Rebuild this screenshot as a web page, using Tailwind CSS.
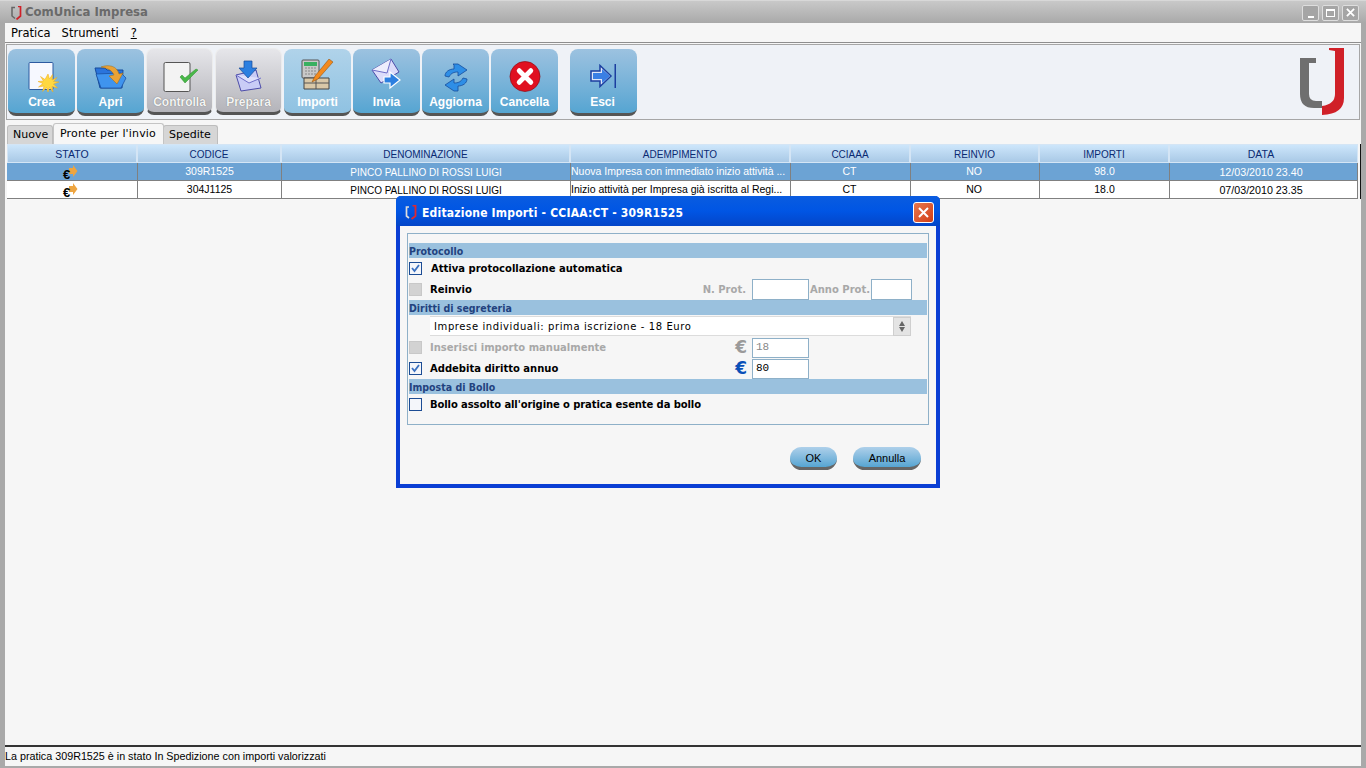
<!DOCTYPE html>
<html lang="it">
<head>
  <meta charset="UTF-8">
  <title>ComUnica Impresa</title>
  <script src="https://cdn.jsdelivr.net/npm/@tailwindcss/browser@4"></script>
</head>
<body class="relative w-[1366px] h-[768px] overflow-hidden bg-[#a9a9a9] font-['Liberation_Sans',sans-serif] text-black">

  <!-- Barra titolo -->
  <div class="h-[23px] flex items-center pl-[11px] pr-[7px] pt-[1px] bg-gradient-to-b from-[#c9c9c9] to-[#a9a9a9] border-t border-[#d8d8d8]">
    <svg width="11" height="14" viewBox="0 0 11 14"><path d="M4 1.500H1V10L4 12.500" fill="none" stroke="#666" stroke-width="1.500"/><path d="M7 .5H9.500V10L5.500 13.500" fill="none" stroke="#d02028" stroke-width="1.700"/></svg>
    <span class="ml-[3px] font-['DejaVu_Sans',sans-serif] font-bold text-[11.700px] text-[#6a6a6a]">ComUnica Impresa</span>
    <div class="ml-auto flex gap-[3px]">
      <div class="w-[17px] h-[16px] rounded-[2px] border border-[#dedede] bg-[#a5a5a5] flex items-end justify-center pb-[2px]"><div class="w-[6px] h-[2px] bg-white"></div></div>
      <div class="w-[17px] h-[16px] rounded-[2px] border border-[#dedede] bg-[#a5a5a5] flex items-center justify-center"><div class="w-[9px] h-[8px] border border-white border-t-2"></div></div>
      <div class="w-[17px] h-[16px] rounded-[2px] border border-[#dedede] bg-[#a5a5a5] flex items-center justify-center">
        <svg width="9" height="9" viewBox="0 0 10 10"><path d="M1 1L9 9M9 1L1 9" stroke="#fff" stroke-width="2"/></svg>
      </div>
    </div>
  </div>

  <!-- Finestra -->
  <div class="ml-[5px] mr-[5px] h-[743px] bg-[#f6f6f6] flex flex-col">
    <!-- Menu -->
    <div class="h-[20px] flex items-center pl-[6px] pt-[3px] gap-[11px] font-['DejaVu_Sans',sans-serif] text-[11.500px] border-b border-[#8e8e8e]">
      <span>Pratica</span><span>Strumenti</span><span class="underline ml-[1px]">?</span>
    </div>

    <!-- Toolbar -->
    <div class="mt-[1px] ml-[1px] mr-[1px] h-[76px] flex items-start pl-[1px] pt-[4px] gap-[2px] bg-[#eff2f7] border border-[#a6a6a6] relative">
      <div class="w-[67px] h-[67px] rounded-[8px] bg-gradient-to-b from-[#9cc2e0] to-[#55a5d2] border-b-[3px] border-[#555] flex flex-col items-center text-white font-bold text-[12px]">
        <div class="h-[46px] w-full flex items-end justify-center pb-[3px]">
          <svg class="ml-[4px]" width="31" height="30" viewBox="0 0 31 30"><rect x="1" y=".5" width="24" height="27" rx="1" fill="#f6f8ff" stroke="#2c5aa0"/><path d="M20 12l1.500 5 3-4.500-.5 5.500 5-2.500-3.500 4 5.500.5-5.500 2 4 4-5.500-1.500 1 5.500-3.500-4.500-1.500 5-1.500-5-4 4 1.500-5.500-5.500 1 4.500-3.500-5-2 5.500-.5-3-4.500 4.500 3z" fill="#ffd840" stroke="#f0a818" stroke-width=".5"/></svg>
        </div>
        <span class="leading-[14px]">Crea</span>
      </div>
      <div class="w-[67px] h-[67px] rounded-[8px] bg-gradient-to-b from-[#9cc2e0] to-[#55a5d2] border-b-[3px] border-[#555] flex flex-col items-center text-white font-bold text-[12px]">
        <div class="h-[46px] w-full flex items-end justify-center pb-[5px]">
          <svg width="33" height="25" viewBox="0 0 33 25"><path d="M1 3h10l2 2h16l-1 18H6z" fill="#2a74dc" stroke="#174a9a"/><path d="M2 9l25-1 5 5-5 10H7z" fill="#3f94ee" stroke="#174a9a" stroke-width=".7"/><path d="M7 2C15-1 23 1 25 9l4-1-6 11-8-8 5-1C18 5 13 3 7 2z" fill="#e9a236" stroke="#a26a12" stroke-width=".5"/></svg>
        </div>
        <span class="leading-[14px]">Apri</span>
      </div>
      <div class="w-[67px] h-[67px] rounded-[8px] bg-gradient-to-b from-[#e6e6ea] to-[#b4b4ba] border border-[#ececec] border-b-[3px] border-b-[#555] -mt-[1px] flex flex-col items-center text-[#f4f4f4] font-bold text-[12px]">
        <div class="h-[46px] w-full flex items-end justify-center pb-[3px]">
          <svg class="ml-[2px]" width="36" height="30" viewBox="0 0 36 30"><rect x="1" y=".5" width="26" height="29" rx="1.500" fill="#f3f3f3" stroke="#555"/><path d="M17 15l5 6 13-13-2-1-11 9-3-3z" fill="#49b849" stroke="#2f8f2f" stroke-width=".5"/></svg>
        </div>
        <span class="leading-[14px] [text-shadow:0_0_1px_#666]">Controlla</span>
      </div>
      <div class="w-[67px] h-[67px] rounded-[8px] bg-gradient-to-b from-[#e6e6ea] to-[#b4b4ba] border border-[#ececec] border-b-[3px] border-b-[#555] -mt-[1px] flex flex-col items-center text-[#f4f4f4] font-bold text-[12px]">
        <div class="h-[46px] w-full flex items-end justify-center pb-[3px]">
          <svg width="27" height="32" viewBox="0 0 27 32"><path d="M1 15l20-5 5 18-20 3z" fill="#c9ccf6" stroke="#4c4ca8"/><path d="M1 15l13 8 12-5" fill="#dfe0fb" stroke="#6e6ec8"/><path d="M9 1h8v7h5l-9 10-9-10h5z" fill="#2c7fe0" stroke="#174a9a" stroke-width=".7"/></svg>
        </div>
        <span class="leading-[14px] [text-shadow:0_0_1px_#666]">Prepara</span>
      </div>
      <div class="w-[67px] h-[67px] rounded-[8px] bg-gradient-to-b from-[#b0d3ea] to-[#8fc2e2] border-b-[3px] border-[#555] flex flex-col items-center text-white font-bold text-[12px]">
        <div class="h-[46px] w-full flex items-end justify-center pb-[5px]">
          <svg width="33" height="31" viewBox="0 0 33 31"><rect x="1" y="1" width="17" height="18" rx="1" fill="#c8c8c8" stroke="#555"/><rect x="3" y="3" width="13" height="4" fill="#38b060"/><path d="M4 9h11M4 12h11M4 15h11" stroke="#888" stroke-dasharray="2 1"/><path d="M3 19h25v11H3z" fill="#d9c8a8" stroke="#444"/><path d="M15 19v11M3 24h25" stroke="#555"/><path d="M28 0l4 3-15 17-6 3 3-6z" fill="#f28a1e" stroke="#884808" stroke-width=".5"/></svg>
        </div>
        <span class="leading-[14px]">Importi</span>
      </div>
      <div class="w-[67px] h-[67px] rounded-[8px] bg-gradient-to-b from-[#9cc2e0] to-[#55a5d2] border-b-[3px] border-[#555] flex flex-col items-center text-white font-bold text-[12px]">
        <div class="h-[46px] w-full flex items-end justify-center pb-[5px]">
          <svg width="31" height="32" viewBox="0 0 31 32"><path d="M1 12L20 1l8 13-18 11z" fill="#dcdcfa" stroke="#4c4ca8"/><path d="M1 12l15 3L20 1" fill="#eeeefd" stroke="#6e6ec8"/><path d="M13 19h6v-5l10 8-10 8v-5h-6z" fill="#2c7fe0" stroke="#fff" stroke-width="1.200"/></svg>
        </div>
        <span class="leading-[14px]">Invia</span>
      </div>
      <div class="w-[67px] h-[67px] rounded-[8px] bg-gradient-to-b from-[#9cc2e0] to-[#55a5d2] border-b-[3px] border-[#555] flex flex-col items-center text-white font-bold text-[12px]">
        <div class="h-[46px] w-full flex items-end justify-center pb-[3px]">
          <svg width="24" height="29" viewBox="0 0 24 29"><path d="M1 13c0-4 4-7 9-7V2l-1-1h5l9 6-9 6V9c-4 0-7 1-9 5z" fill="#2e8ee6" stroke="#154c9c" stroke-width=".8"/><path d="M23 16c0 4-4 7-9 7v5h-4l-9-6 9-6v4c4 0 7-1 9-5z" fill="#2e8ee6" stroke="#154c9c" stroke-width=".8"/></svg>
        </div>
        <span class="leading-[14px]">Aggiorna</span>
      </div>
      <div class="w-[67px] h-[67px] rounded-[8px] bg-gradient-to-b from-[#9cc2e0] to-[#55a5d2] border-b-[3px] border-[#555] flex flex-col items-center text-white font-bold text-[12px]">
        <div class="h-[46px] w-full flex items-end justify-center pb-[3px]">
          <svg width="32" height="31" viewBox="0 0 32 32"><circle cx="16" cy="16" r="15.500" fill="#e01020" stroke="#8c0c14" stroke-width=".7"/><path d="M10 10l12 12M22 10L10 22" stroke="#fff" stroke-width="5" stroke-linecap="round"/></svg>
        </div>
        <span class="leading-[14px]">Cancella</span>
      </div>
      <div class="ml-[10px] w-[67px] h-[67px] rounded-[8px] bg-gradient-to-b from-[#9cc2e0] to-[#55a5d2] border-b-[3px] border-[#555] flex flex-col items-center text-white font-bold text-[12px]">
        <div class="h-[46px] w-full flex items-end justify-center pb-[7px]">
          <svg class="mr-[2px]" width="26" height="24" viewBox="0 0 26 24"><path d="M1 7h9V1.500L21 12 10 22.500V17H1z" fill="#dfe6f8" stroke="#1c3fa0" stroke-width="1.500"/><path d="M3 9h9V5l8 7-8 7v-4H3z" fill="#3a7fe4"/><rect x="24.500" y="0" width="1.500" height="24" fill="#1c3fa0"/></svg>
        </div>
        <span class="leading-[14px] mr-[2px]">Esci</span>
      </div>
      <svg class="absolute right-[15px] top-[3px]" width="44" height="67" viewBox="0 0 44 67"><path d="M0 10H16V15H9V46Q9 53 16 53H22V60H14Q0 60 0 46Z" fill="#6f6f6f"/><path d="M29 0H44V50Q44 66 22 67V58Q35 56 35 46V3L29 2Z" fill="#d02028"/></svg>
    </div>

    <!-- Linguette -->
    <div class="mt-[3px] h-[21px] flex items-end pl-[2px] font-['DejaVu_Sans',sans-serif] text-[11px]">
      <div class="h-[19px] w-[46px] px-[5px] pt-[1px] bg-[#d6d6d6] border border-b-0 border-[#bdbdbd] rounded-t-[3px] flex items-center">Nuove</div>
      <div class="h-[21px] w-[111px] -mr-[1px] px-[6px] bg-[#f6f6f6] border border-b-0 border-[#c4c4c4] rounded-t-[3px] flex items-center whitespace-nowrap z-10 tracking-[0.15px]">Pronte per l'invio</div>
      <div class="h-[19px] w-[55px] px-[5px] pt-[1px] bg-[#d6d6d6] border border-b-0 border-[#bdbdbd] rounded-t-[3px] flex items-center">Spedite</div>
    </div>

    <!-- Tabella -->
    <div class="ml-[2px] w-[1354px] border-r border-[#111]">
      <div class="w-[1351px] text-[10.500px] text-center grid grid-cols-[130px_144px_289px_220px_120px_129px_130px_189px]">
        <div class="h-[19px] pt-[2px] text-[10.500px] flex items-center justify-center text-[#0a2a72] bg-gradient-to-b from-[#cde6fb] to-[#a9c9e6] border border-[#d4e5f5]">STATO</div>
        <div class="h-[19px] pt-[1px] text-[10px] flex items-center justify-center text-[#0a2a72] bg-gradient-to-b from-[#cde6fb] to-[#a9c9e6] border border-[#d4e5f5]">CODICE</div>
        <div class="h-[19px] pt-[1px] text-[10px] flex items-center justify-center text-[#0a2a72] bg-gradient-to-b from-[#cde6fb] to-[#a9c9e6] border border-[#d4e5f5]">DENOMINAZIONE</div>
        <div class="h-[19px] pt-[1px] text-[10px] flex items-center justify-center text-[#0a2a72] bg-gradient-to-b from-[#cde6fb] to-[#a9c9e6] border border-[#d4e5f5]">ADEMPIMENTO</div>
        <div class="h-[19px] pt-[1px] text-[10px] flex items-center justify-center text-[#0a2a72] bg-gradient-to-b from-[#cde6fb] to-[#a9c9e6] border border-[#d4e5f5]">CCIAAA</div>
        <div class="h-[19px] pt-[1px] text-[10px] flex items-center justify-center text-[#0a2a72] bg-gradient-to-b from-[#cde6fb] to-[#a9c9e6] border border-[#d4e5f5]">REINVIO</div>
        <div class="h-[19px] pt-[1px] text-[10px] flex items-center justify-center text-[#0a2a72] bg-gradient-to-b from-[#cde6fb] to-[#a9c9e6] border border-[#d4e5f5]">IMPORTI</div>
        <div class="h-[19px] pt-[2px] pr-[5px] text-[10.500px] flex items-center justify-center text-[#0a2a72] bg-gradient-to-b from-[#cde6fb] to-[#a9c9e6] border border-[#d4e5f5]">DATA</div>

        <div class="h-[18px] flex items-center justify-center bg-[#6ca3d4] border-b border-[#808080]">
          <svg class="overflow-visible -ml-[2px]" width="16" height="17" viewBox="0 0 16 17"><path d="M6 5h4V2l4.500 6L10 14v-3H6z" fill="#eea540"/><text x="0" y="16" font-family="Liberation Sans" font-weight="700" font-size="13">€</text></svg>
        </div>
        <div class="h-[18px] pt-[1px] flex items-center justify-center bg-[#6ca3d4] text-white border-l border-b border-[#808080]">309R1525</div>
        <div class="h-[18px] pt-[1px] text-[10px] flex items-center justify-center bg-[#6ca3d4] text-white border-l border-b border-[#808080]">PINCO PALLINO DI ROSSI LUIGI</div>
        <div class="h-[18px] pt-[1px] flex items-center bg-[#6ca3d4] text-white border-l border-b border-[#808080] whitespace-nowrap overflow-hidden">Nuova Impresa con immediato inizio attività ...</div>
        <div class="h-[18px] pt-[1px] pr-[2px] flex items-center justify-center bg-[#6ca3d4] text-white border-l border-b border-[#808080]">CT</div>
        <div class="h-[18px] pt-[1px] pr-[2px] flex items-center justify-center bg-[#6ca3d4] text-white border-l border-b border-[#808080]">NO</div>
        <div class="h-[18px] pt-[1px] flex items-center justify-center bg-[#6ca3d4] text-white border-l border-b border-[#808080]">98.0</div>
        <div class="h-[18px] pt-[1px] pr-[5px] text-[10.700px] flex items-center justify-center bg-[#6ca3d4] text-white border-l border-r border-b border-[#808080]">12/03/2010 23.40</div>

        <div class="h-[18px] flex items-center justify-center bg-white border-b border-[#808080]">
          <svg class="overflow-visible -ml-[2px]" width="16" height="17" viewBox="0 0 16 17"><path d="M6 5h4V2l4.500 6L10 14v-3H6z" fill="#eea540"/><text x="0" y="16" font-family="Liberation Sans" font-weight="700" font-size="13">€</text></svg>
        </div>
        <div class="h-[18px] pt-[1px] flex items-center justify-center bg-white border-l border-b border-[#808080]">304J1125</div>
        <div class="h-[18px] pt-[1px] text-[10px] flex items-center justify-center bg-white border-l border-b border-[#808080]">PINCO PALLINO DI ROSSI LUIGI</div>
        <div class="h-[18px] pt-[1px] flex items-center bg-white border-l border-b border-[#808080] whitespace-nowrap overflow-hidden">Inizio attività per Impresa già iscritta al Regi...</div>
        <div class="h-[18px] pt-[1px] pr-[2px] flex items-center justify-center bg-white border-l border-b border-[#808080]">CT</div>
        <div class="h-[18px] pt-[1px] pr-[2px] flex items-center justify-center bg-white border-l border-b border-[#808080]">NO</div>
        <div class="h-[18px] pt-[1px] flex items-center justify-center bg-white border-l border-b border-[#808080]">18.0</div>
        <div class="h-[18px] pt-[1px] pr-[5px] text-[10.700px] flex items-center justify-center bg-white border-l border-r border-b border-[#808080]">07/03/2010 23.35</div>
      </div>
    </div>

    <!-- Stato -->
    <div class="mt-auto h-[21px] flex items-center border-t-2 border-[#333] text-[10.750px] whitespace-nowrap">La pratica 309R1525 è in stato In Spedizione con importi valorizzati</div>
  </div>

  <!-- Dialogo importi -->
  <div class="absolute left-[396px] top-[196px] w-[544px] h-[292px] bg-[#f6f6f6] border-[4px] border-t-0 border-[#0a3ed4] rounded-t-[5px] flex flex-col">
    <div class="-mx-[4px] h-[30px] rounded-t-[5px] bg-gradient-to-b from-[#0a5ce0] via-[#0055e4] to-[#0345c8] flex items-center pl-[9px] pr-[6px]">
      <svg class="mt-[3px]" width="12" height="15" viewBox="0 0 12 15"><path d="M4 2H1.500V11L4 13" fill="none" stroke="#ddd" stroke-width="1.700"/><path d="M7.500 .5H10.500V11L6.500 14" fill="none" stroke="#e02830" stroke-width="1.800"/></svg>
      <span class="ml-[5px] mt-[3px] text-white font-['DejaVu_Sans_Condensed','DejaVu_Sans',sans-serif] font-bold text-[12px] tracking-[0.2px]">Editazione Importi - CCIAA:CT - 309R1525</span>
      <div class="ml-auto mt-[2px] w-[21px] h-[21px] rounded-[3px] border border-white bg-gradient-to-br from-[#e8764c] to-[#d23c12] flex items-center justify-center">
        <svg width="13" height="13" viewBox="0 0 13 13"><path d="M2 2L11 11M11 2L2 11" stroke="#fff" stroke-width="2"/></svg>
      </div>
    </div>

    <div class="mx-[7px] mt-[7px] h-[192px] border border-[#8eb0c8] pt-[9px] px-[1px] font-['DejaVu_Sans',sans-serif] text-[10px] font-bold">
      <div class="h-[15px] pt-[2px] bg-[#9ac1de] text-[#22427e] font-['DejaVu_Sans_Condensed','DejaVu_Sans',sans-serif] text-[10.500px] flex items-center">Protocollo</div>

      <div class="h-[21px] flex items-center">
        <div class="w-[13px] h-[13px] border border-[#1c4c94] bg-[#f4f6fa] flex items-center justify-center"><svg width="9" height="9" viewBox="0 0 9 9"><path d="M1 4l2.500 3L8 1" fill="none" stroke="#3a70c0" stroke-width="1.800"/></svg></div>
        <span class="ml-[9px]">Attiva protocollazione automatica</span>
      </div>

      <div class="h-[21px] flex items-center">
        <div class="w-[13px] h-[13px] bg-[#d2d2d2] border border-[#c8c8c8]"></div>
        <span class="ml-[8px]">Reinvio</span>
        <span class="ml-auto text-[#a8a8a8]">N. Prot.</span>
        <div class="ml-[6px] w-[57px] h-[21px] border border-[#8eb0c8] bg-white"></div>
        <span class="ml-[1px] w-[61px] whitespace-nowrap text-[#a8a8a8]">Anno Prot.</span>
        <div class="w-[41px] h-[21px] border border-[#8eb0c8] bg-white mr-[15px]"></div>
      </div>

      <div class="h-[15px] pt-[2px] bg-[#9ac1de] text-[#22427e] font-['DejaVu_Sans_Condensed','DejaVu_Sans',sans-serif] text-[10.500px] flex items-center">Diritti di segreteria</div>

      <div class="mt-[1px] mb-[1px] ml-[21px] mr-[16px] h-[20px] bg-white border-t border-b border-[#dcdcdc] flex items-center pl-[4px] font-normal tracking-[0.6px]">
        Imprese individuali: prima iscrizione - 18 Euro
        <div class="ml-auto w-[18px] h-[19px] bg-[#e4e4e4] border border-[#cfcfcf] flex flex-col items-center justify-center gap-[1px]">
          <div class="w-0 h-0 border-x-[3px] border-x-transparent border-b-[5px] border-b-[#666]"></div>
          <div class="w-0 h-0 border-x-[3px] border-x-transparent border-t-[5px] border-t-[#666]"></div>
        </div>
      </div>

      <div class="h-[21px] flex items-center">
        <div class="w-[13px] h-[13px] bg-[#d2d2d2] border border-[#c8c8c8]"></div>
        <span class="ml-[8px] text-[#a8a8a8]">Inserisci importo manualmente</span>
        <span class="ml-auto text-[#9a9a9a] text-[17px] leading-none">€</span>
        <div class="ml-[5px] mr-[118px] w-[57px] h-[20px] border border-[#8eb0c8] bg-white text-[#888] font-normal font-['Liberation_Mono',monospace] text-[11px] flex items-center pl-[3px]">18</div>
      </div>

      <div class="h-[21px] flex items-center">
        <div class="w-[13px] h-[13px] border border-[#1c4c94] bg-[#f4f6fa] flex items-center justify-center"><svg width="9" height="9" viewBox="0 0 9 9"><path d="M1 4l2.500 3L8 1" fill="none" stroke="#3a70c0" stroke-width="1.800"/></svg></div>
        <span class="ml-[8px]">Addebita diritto annuo</span>
        <span class="ml-auto text-[#0a50b8] text-[17px] leading-none">€</span>
        <div class="ml-[5px] mr-[118px] w-[57px] h-[20px] border border-[#8eb0c8] bg-white font-normal font-['Liberation_Mono',monospace] text-[11px] flex items-center pl-[3px]">80</div>
      </div>

      <div class="h-[15px] pt-[2px] bg-[#9ac1de] text-[#22427e] font-['DejaVu_Sans_Condensed','DejaVu_Sans',sans-serif] text-[10.500px] flex items-center">Imposta di Bollo</div>

      <div class="h-[21px] flex items-center">
        <div class="w-[13px] h-[13px] border border-[#1c4c94] bg-[#f4f6fa]"></div>
        <span class="ml-[8px] tracking-[-0.1px]">Bollo assolto all'origine o pratica esente da bollo</span>
      </div>
    </div>

    <div class="mt-[22px] flex justify-end gap-[16px] pr-[15px] text-[11px]">
      <div class="w-[47px] h-[23px] pt-[2px] rounded-full bg-gradient-to-b from-[#aed0ea] to-[#55a5d2] border-b-[3px] border-[#666] flex items-center justify-center">OK</div>
      <div class="w-[68px] h-[23px] pt-[2px] rounded-full bg-gradient-to-b from-[#aed0ea] to-[#55a5d2] border-b-[3px] border-[#666] flex items-center justify-center">Annulla</div>
    </div>
  </div>

</body>
</html>
